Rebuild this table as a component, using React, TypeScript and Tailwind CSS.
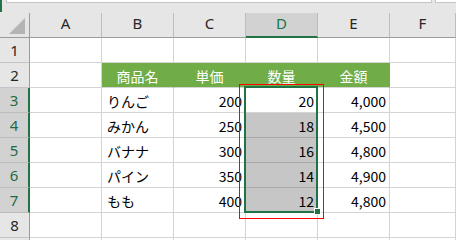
import React from "react";

type Row = { n: number; cells: string[] };

const COLS = ["A", "B", "C", "D", "E", "F"];

const DATA: Row[] = [
  { n: 1, cells: ["", "", "", "", "", ""] },
  { n: 2, cells: ["", "商品名", "単価", "数量", "金額", ""] },
  { n: 3, cells: ["", "りんご", "200", "20", "4,000", ""] },
  { n: 4, cells: ["", "みかん", "250", "18", "4,500", ""] },
  { n: 5, cells: ["", "バナナ", "300", "16", "4,800", ""] },
  { n: 6, cells: ["", "パイン", "350", "14", "4,900", ""] },
  { n: 7, cells: ["", "もも", "400", "12", "4,800", ""] },
  { n: 8, cells: ["", "", "", "", "", ""] },
  { n: 9, cells: ["", "", "", "", "", ""] },
];

const gridCols = "grid grid-cols-[30px_72px_72px_72px_72px_72px_1fr]";

function ColumnHeader() {
  return (
    <div className={gridCols}>
      <div className="relative h-[25px] bg-[#e6e6e6] border-r border-b border-r-[#9b9b9b] border-b-[#9b9b9b]">
        <svg className="absolute left-0 top-0" width="29" height="24" viewBox="0 0 29 24">
          <polygon points="9,21 25,21 25,5" fill="#b4b4b4" />
        </svg>
      </div>
      {COLS.map((c) =>
        c === "D" ? (
          <div
            key={c}
            className="h-[25px] bg-[#d2d2d2] border-r border-r-[#bdbdbd] border-b-2 border-b-[#217346] text-[#217346] text-center font-['Noto_Sans',sans-serif] text-[15px] leading-[21px]"
          >
            {c}
          </div>
        ) : (
          <div
            key={c}
            className="h-[25px] bg-[#e6e6e6] border-r border-b border-r-[#bdbdbd] border-b-[#9b9b9b] text-[#262626] text-center font-['Noto_Sans',sans-serif] text-[15px] leading-[21px]"
          >
            {c}
          </div>
        )
      )}
    </div>
  );
}

function RowHead({ n }: { n: number }) {
  const selected = n >= 3 && n <= 7;
  // the last row is only a sliver at the bottom edge, so it carries no label
  const label = n <= 8 ? n : "";
  return selected ? (
    <div className="h-[25px] bg-[#d2d2d2] border-b border-b-[#bcbcbc] border-r-2 border-r-[#217346] text-[#1f6a44] text-center font-['Noto_Sans',sans-serif] text-[15px] leading-[24px]">
      {label}
    </div>
  ) : (
    <div className="h-[25px] bg-[#e6e6e6] border-r border-b border-r-[#9b9b9b] border-b-[#c4c4c4] text-[#262626] text-center font-['Noto_Sans',sans-serif] text-[15px] leading-[24px]">
      {label}
    </div>
  );
}

function Cell({ row, col, value }: { row: number; col: number; value: string }) {
  const base =
    "h-[25px] border-r border-b pt-[1px] whitespace-nowrap font-['Noto_Sans_CJK_JP',sans-serif] text-[14px] leading-[24px]";
  if (row === 2 && col >= 1 && col <= 4) {
    return (
      <div className={`${base} bg-[#70ad47] border-r-[#70ad47] border-b-[#d4d4d4] text-white text-center`}>
        {value}
      </div>
    );
  }
  if (col === 3 && row >= 4 && row <= 7) {
    return (
      <div className={`${base} bg-[#c6c6c6] border-r-[#d4d4d4] border-b-[#a9a9a9] text-black text-right pr-[3px]`}>
        {value}
      </div>
    );
  }
  const align = col === 1 ? "text-left pl-[5px]" : "text-right pr-[3px]";
  return (
    <div className={`${base} bg-white border-[#d4d4d4] text-black ${align}`}>{value}</div>
  );
}

export default function App() {
  return (
    <div className="relative w-[456px] h-[240px] overflow-hidden bg-white">
      {/* formula bar strip */}
      <div className="flex items-start h-[13px] bg-[#e6e6e6]">
        <div className="w-[2px] h-[12px] bg-[#217346]" />
        <div className="ml-[4px] w-[426px] h-[3px] bg-white border-l border-r border-b border-[#c6c6c6]" />
        <div className="ml-[3px] flex-1 h-[3px] bg-white border-l border-b border-[#c6c6c6]" />
      </div>

      <ColumnHeader />

      {DATA.map((r) => (
        <div key={r.n} className={gridCols}>
          <RowHead n={r.n} />
          {r.cells.map((v, i) => (
            <Cell key={i} row={r.n} col={i} value={v} />
          ))}
        </div>
      ))}

      {/* selection outline D3:D7 */}
      <div className="absolute left-[244px] top-[86px] w-[74px] h-[127px] border-2 border-[#217346]" />
      {/* fill handle */}
      <div className="absolute left-[314px] top-[208px] w-[7px] h-[7px] bg-[#217346] border border-white" />
      {/* red highlight frame */}
      <div className="absolute left-[239px] top-[84px] w-[85px] h-[135px] border border-[#ff0000]" />
    </div>
  );
}
